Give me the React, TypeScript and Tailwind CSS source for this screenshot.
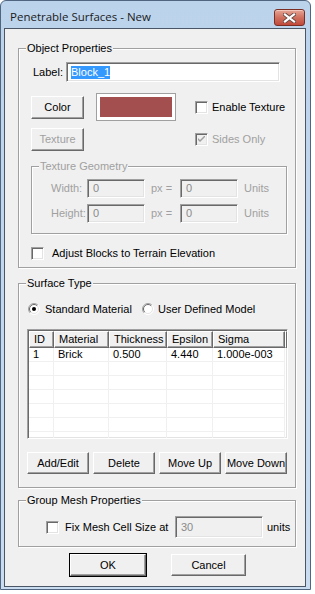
import React from "react";

const sunken =
  "border border-t-[#a0a0a0] border-l-[#a0a0a0] border-r-white border-b-white shadow-[inset_1px_1px_0_#696969,inset_-1px_-1px_0_#e3e3e3]";
const raised =
  "border border-t-white border-l-white border-r-[#696969] border-b-[#696969] shadow-[inset_-1px_-1px_0_#a0a0a0]";

function Btn({ children, className = "", disabled = false }: { children: React.ReactNode; className?: string; disabled?: boolean }) {
  return (
    <div className={`flex items-center justify-center bg-[#f0f0f0] ${raised} ${disabled ? "text-[#a0a0a0]" : "text-black"} ${className}`}>
      {children}
    </div>
  );
}

function Check({ checked = false, disabled = false }: { checked?: boolean; disabled?: boolean }) {
  return (
    <div className={`w-[13px] h-[13px] shrink-0 flex items-center justify-center ${sunken} ${disabled ? "bg-[#f0f0f0]" : "bg-white"}`}>
      {checked && (
        <svg width="7" height="7" viewBox="0 0 7 7">
          <path d="M0 2 L0 4 L2 6 L7 1 L7 -1 L2 4 Z" fill={disabled ? "#a0a0a0" : "#000"} />
        </svg>
      )}
    </div>
  );
}

function Radio({ checked = false }: { checked?: boolean }) {
  return (
    <svg width="12" height="12" viewBox="0 0 12 12" className="shrink-0">
      <circle cx="6" cy="6" r="5.5" fill="#fff" />
      <path d="M2.1 9.9 A5.5 5.5 0 0 1 9.9 2.1" fill="none" stroke="#a0a0a0" strokeWidth="1" />
      <path d="M9.9 2.1 A5.5 5.5 0 0 1 2.1 9.9" fill="none" stroke="#ffffff" strokeWidth="1" />
      <path d="M2.8 9.2 A4.5 4.5 0 0 1 9.2 2.8" fill="none" stroke="#696969" strokeWidth="1" />
      <path d="M9.2 2.8 A4.5 4.5 0 0 1 2.8 9.2" fill="none" stroke="#e3e3e3" strokeWidth="1" />
      {checked && <circle cx="6" cy="6" r="2" fill="#000" />}
    </svg>
  );
}

function Group({ label, className = "", children, disabled = false }: { label: string; className?: string; children?: React.ReactNode; disabled?: boolean }) {
  return (
    <div className={`relative border border-[#a0a0a0] shadow-[1px_1px_0_#fff,inset_1px_1px_0_#fff] shrink-0 ${className}`}>
      <span className={`absolute left-[7px] -top-[8px] px-[1px] bg-[#f0f0f0] leading-[14px] ${disabled ? "text-[#a0a0a0]" : "text-black"}`}>
        {label}
      </span>
      {children}
    </div>
  );
}

const cols = [25, 55, 58, 46, 72];
const headers = ["ID", "Material", "Thickness", "Epsilon", "Sigma"];
const rows: string[][] = [
  ["1", "Brick", "0.500", "4.440", "1.000e-003"],
  ["", "", "", "", ""],
  ["", "", "", "", ""],
  ["", "", "", "", ""],
  ["", "", "", "", ""],
  ["", "", "", "", ""],
  ["", "", "", "", ""],
];

export default function App() {
  return (
    <div className="w-[315px] h-[594px] bg-white font-['Liberation_Sans',Arial,sans-serif] text-[11px] text-black">
      <div className="w-[311px] h-[590px] border border-[#4f6580] rounded-t-[6px] bg-linear-to-b from-[#bcd3ec] to-[#c9dcf0] flex flex-col pl-[3px] pr-[4px] pb-[2px]">
        {/* title bar */}
        <div className="h-[27px] flex items-start shrink-0">
          <span className="mt-[8px] ml-[6px] font-['Open_Sans',sans-serif] text-[11.5px] leading-[16px] text-[#1b1b1b]">
            Penetrable Surfaces - New
          </span>
          <div className="ml-auto mr-[1px] mt-[8px] w-[31px] h-[17px] rounded-[3px] border border-[#7a2e24] bg-linear-to-b from-[#e6a596] via-[#d0705f] to-[#c0483a] flex items-center justify-center shadow-[inset_0_1px_0_#f3c6bb]">
            <svg width="13" height="10" viewBox="0 0 13 10">
              <path d="M2 1.5 L11 8.5 M11 1.5 L2 8.5" stroke="#6b4a45" strokeWidth="4" strokeLinecap="square" />
              <path d="M2 1.5 L11 8.5 M11 1.5 L2 8.5" stroke="#ffffff" strokeWidth="2.2" strokeLinecap="square" />
            </svg>
          </div>
        </div>
        {/* client */}
        <div className="flex-1 bg-[#f0f0f0] border border-[#4a5666] flex flex-col">
          {/* Object Properties */}
          <Group label="Object Properties" className="mt-[19px] ml-[13px] w-[278px] h-[220px] flex flex-col">
            <div className="mt-[13px] pl-[14px] flex items-center">
              <span className="w-[33px]">Label:</span>
              <div className={`w-[214px] h-[20px] bg-white ${sunken} flex items-center pl-[4px]`}>
                <span className="bg-[#3399ff] text-white leading-[13px]">Block_1</span>
              </div>
            </div>
            <div className="mt-[11px] pl-[12px] h-[28px] flex items-center">
              <Btn className="w-[53px] h-[23px]">Color</Btn>
              <div className="ml-[12px] w-[80px] h-[28px] border border-[#a0a0a0] bg-white p-[3px]">
                <div className="w-full h-full bg-[#a44f4f]" />
              </div>
              <div className="ml-[19px] flex items-center">
                <Check />
                <span className="ml-[4px]">Enable Texture</span>
              </div>
            </div>
            <div className="mt-[7px] pl-[12px] h-[23px] flex items-center">
              <Btn className="w-[53px] h-[23px]" disabled>Texture</Btn>
              <div className="ml-[111px] flex items-center">
                <Check checked disabled />
                <span className="ml-[4px] text-[#a0a0a0]">Sides Only</span>
              </div>
            </div>
            <Group label="Texture Geometry" disabled className="mt-[15px] ml-[12px] w-[256px] h-[68px] flex flex-col text-[#a0a0a0]">
              {["Width:", "Height:"].map((l, i) => (
                <div key={l} className={`${i === 0 ? "mt-[12px]" : "mt-[6px]"} pl-[19px] flex items-center`}>
                  <span className="w-[36px]">{l}</span>
                  <div className={`w-[58px] h-[19px] bg-[#f0f0f0] ${sunken} flex items-center pl-[5px] text-[#8a8a8a]`}>0</div>
                  <span className="ml-[6px] w-[29px]">px =</span>
                  <div className={`w-[58px] h-[19px] bg-[#f0f0f0] ${sunken} flex items-center pl-[5px] text-[#8a8a8a]`}>0</div>
                  <span className="ml-[6px]">Units</span>
                </div>
              ))}
            </Group>
            <div className="mt-[11px] pl-[12px] flex items-center">
              <Check />
              <span className="ml-[8px]">Adjust Blocks to Terrain Elevation</span>
            </div>
          </Group>

          {/* Surface Type */}
          <Group label="Surface Type" className="mt-[15px] ml-[13px] w-[278px] h-[205px] flex flex-col">
            <div className="mt-[19px] pl-[9px] h-[12px] flex items-center">
              <Radio checked />
              <span className="ml-[5px] w-[97px] whitespace-nowrap">Standard Material</span>
              <Radio />
              <span className="ml-[4px] whitespace-nowrap">User Defined Model</span>
            </div>
            <div className={`mt-[14px] ml-[8px] w-[261px] h-[110px] bg-white ${sunken} p-[1px] overflow-hidden`}>
              <div className="flex h-[17px]">
                {headers.map((h, i) => (
                  <div key={h} style={{ width: cols[i] }} className={`shrink-0 h-[17px] bg-[#f0f0f0] ${raised} flex items-center pl-[4px]`}>
                    {h}
                  </div>
                ))}
                <div className={`flex-1 h-[17px] bg-[#f0f0f0] ${raised}`} />
              </div>
              {rows.map((r, ri) => (
                <div key={ri} className="flex h-[14px]">
                  {r.map((c, ci) => (
                    <div key={ci} style={{ width: cols[ci] }} className="shrink-0 h-[14px] border-r border-b border-[#f0f0f0] flex items-center pl-[4px] leading-[13px]">
                      {c}
                    </div>
                  ))}
                </div>
              ))}
            </div>
            <div className="mt-[13px] ml-[8px] flex gap-[4px]">
              {["Add/Edit", "Delete", "Move Up", "Move Down"].map((b) => (
                <Btn key={b} className="w-[62px] h-[22px]">{b}</Btn>
              ))}
            </div>
          </Group>

          {/* Group Mesh */}
          <Group label="Group Mesh Properties" className="mt-[12px] ml-[13px] w-[278px] h-[47px] flex flex-col">
            <div className="mt-[15px] pl-[27px] flex items-center">
              <Check />
              <span className="ml-[6px] w-[110px] whitespace-nowrap">Fix Mesh Cell Size at</span>
              <div className={`w-[88px] h-[22px] bg-[#f0f0f0] ${sunken} flex items-center pl-[5px] text-[#8a8a8a]`}>30</div>
              <span className="ml-[4px]">units</span>
            </div>
          </Group>

          <div className="mt-[6px] ml-[64px] flex items-start">
            <div className="w-[78px] h-[24px] border border-black">
              <Btn className="w-full h-full">OK</Btn>
            </div>
            <Btn className="ml-[24px] mt-[1px] w-[75px] h-[22px]">Cancel</Btn>
          </div>
        </div>
      </div>
    </div>
  );
}
